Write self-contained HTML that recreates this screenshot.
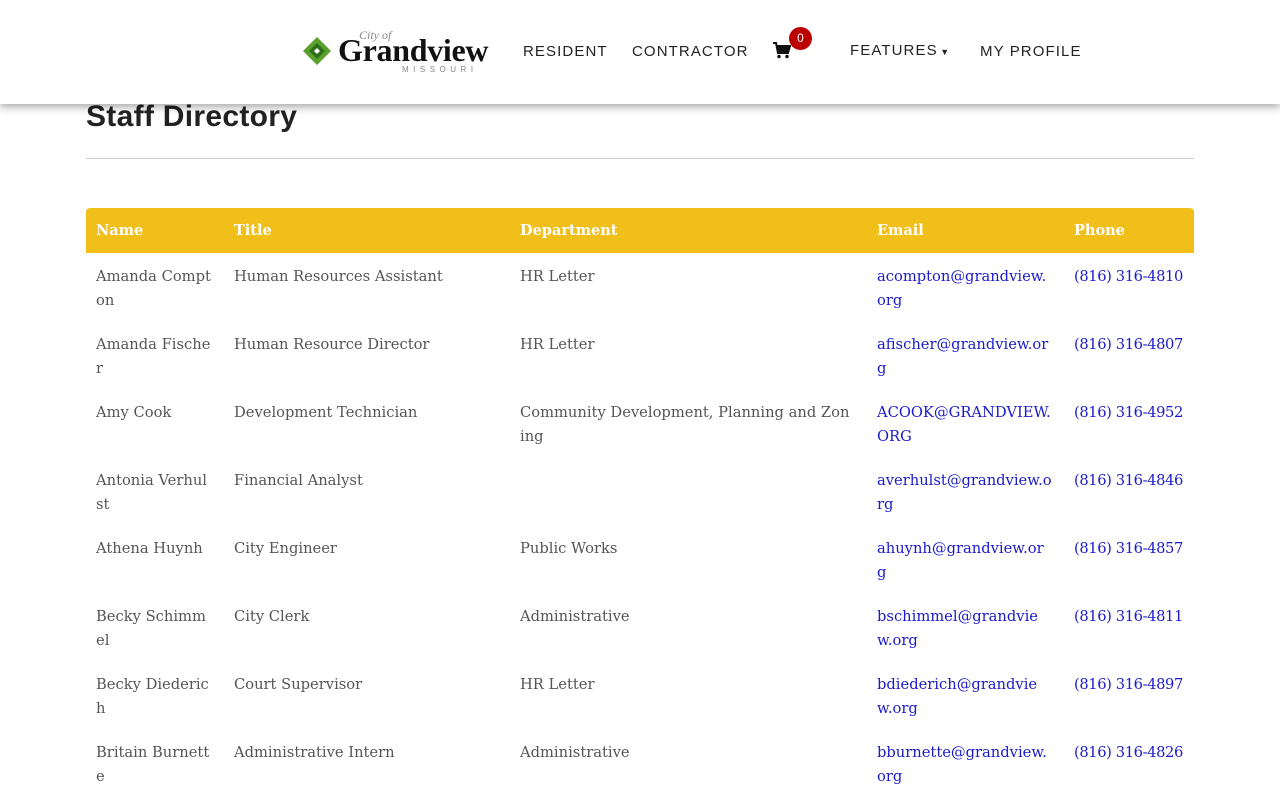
<!DOCTYPE html>
<html><head><meta charset="utf-8"><style>
*{margin:0;padding:0;box-sizing:border-box}
body{width:1280px;height:800px;overflow:hidden;background:#fff;font-family:"DejaVu Serif",serif;position:relative}
.hdr{position:absolute;left:0;top:0;width:1280px;height:104px;background:#fff;box-shadow:0 3px 8px rgba(0,0,0,.35);z-index:2}
.nav{position:absolute;top:43px;font-family:"Liberation Sans",sans-serif;font-size:15px;letter-spacing:1.1px;color:#222}
h1{position:absolute;left:86px;top:100px;font-family:"Liberation Sans",sans-serif;font-weight:bold;font-size:30px;color:#222;letter-spacing:0.3px}
.hr{position:absolute;left:86px;top:158px;width:1108px;height:1px;background:#ccc}
.th{position:absolute;left:86px;top:208px;width:1108px;height:45px;background:#f0bf1a;border-radius:4px 4px 0 0}
.h{position:absolute;top:222px;color:#fff;font-weight:bold;font-size:14.5px}
.c{position:absolute;font-size:14.7px;line-height:24px;color:#555;white-space:nowrap}
.l{color:#1a1acc}
.p{letter-spacing:-0.4px}
</style></head><body>
<div class="hdr">
<svg style="position:absolute;left:302px;top:36px" width="30" height="30" viewBox="0 0 30 30"><path d="M15 1L29 15L15 29L1 15Z" fill="#5aa02c"/><path d="M15 7L23 15L15 23L7 15Z" fill="#2f6e1a"/><path d="M15 12L18 15L15 18L12 15Z" fill="#fff"/></svg>
<div style="position:absolute;left:359px;top:28px;font-family:'Liberation Serif',serif;font-style:italic;font-size:12px;color:#888">City of</div>
<div style="position:absolute;left:338px;top:32px;font-family:'Liberation Serif',serif;font-weight:bold;font-size:32px;color:#111;letter-spacing:-0.3px">Grandview</div>
<div style="position:absolute;left:402px;top:65px;font-family:'Liberation Sans',sans-serif;font-size:8px;letter-spacing:4.5px;color:#888">MISSOURI</div>
<div class="nav" style="left:523px">RESIDENT</div>
<div class="nav" style="left:632px">CONTRACTOR</div>
<svg style="position:absolute;left:773px;top:42px" width="18" height="17" viewBox="0 0 18 17"><path d="M0 1H3L5 11H15L17 4H4" fill="none" stroke="#111" stroke-width="2"/><path d="M4 4H17L15 10H5Z" fill="#111"/><circle cx="6" cy="14.5" r="1.7" fill="#111"/><circle cx="14" cy="14.5" r="1.7" fill="#111"/></svg>
<div style="position:absolute;left:789px;top:27px;width:23px;height:23px;border-radius:50%;background:#b00;color:#fff;font-family:'Liberation Sans',sans-serif;font-size:12px;text-align:center;line-height:23px">0</div>
<div class="nav" style="left:850px;top:42px">FEATURES<span style="font-size:9px;letter-spacing:0">&nbsp;▼</span></div>
<div class="nav" style="left:980px">MY PROFILE</div>
</div>
<h1>Staff Directory</h1>
<div class="hr"></div>
<div class="th"></div>
<div class="h" style="left:96px">Name</div><div class="h" style="left:234px">Title</div><div class="h" style="left:520px">Department</div><div class="h" style="left:877px">Email</div><div class="h" style="left:1074px">Phone</div>

<div class="c" style="left:96px;top:265px">Amanda Compt<br>on</div><div class="c" style="left:234px;top:265px">Human Resources Assistant</div><div class="c" style="left:520px;top:265px">HR Letter</div><div class="c l" style="left:877px;top:265px">acompton@grandview.<br>org</div><div class="c l p" style="left:1074px;top:265px">(816) 316-4810</div>

<div class="c" style="left:96px;top:333px">Amanda Fische<br>r</div><div class="c" style="left:234px;top:333px">Human Resource Director</div><div class="c" style="left:520px;top:333px">HR Letter</div><div class="c l" style="left:877px;top:333px">afischer@grandview.or<br>g</div><div class="c l p" style="left:1074px;top:333px">(816) 316-4807</div>

<div class="c" style="left:96px;top:401px">Amy Cook</div><div class="c" style="left:234px;top:401px">Development Technician</div><div class="c" style="left:520px;top:401px">Community Development, Planning and Zon<br>ing</div><div class="c l" style="left:877px;top:401px">ACOOK@GRANDVIEW.<br>ORG</div><div class="c l p" style="left:1074px;top:401px">(816) 316-4952</div>

<div class="c" style="left:96px;top:469px">Antonia Verhul<br>st</div><div class="c" style="left:234px;top:469px">Financial Analyst</div><div class="c l" style="left:877px;top:469px">averhulst@grandview.o<br>rg</div><div class="c l p" style="left:1074px;top:469px">(816) 316-4846</div>

<div class="c" style="left:96px;top:537px">Athena Huynh</div><div class="c" style="left:234px;top:537px">City Engineer</div><div class="c" style="left:520px;top:537px">Public Works</div><div class="c l" style="left:877px;top:537px">ahuynh@grandview.or<br>g</div><div class="c l p" style="left:1074px;top:537px">(816) 316-4857</div>

<div class="c" style="left:96px;top:605px">Becky Schimm<br>el</div><div class="c" style="left:234px;top:605px">City Clerk</div><div class="c" style="left:520px;top:605px">Administrative</div><div class="c l" style="left:877px;top:605px">bschimmel@grandvie<br>w.org</div><div class="c l p" style="left:1074px;top:605px">(816) 316-4811</div>

<div class="c" style="left:96px;top:673px">Becky Diederic<br>h</div><div class="c" style="left:234px;top:673px">Court Supervisor</div><div class="c" style="left:520px;top:673px">HR Letter</div><div class="c l" style="left:877px;top:673px">bdiederich@grandvie<br>w.org</div><div class="c l p" style="left:1074px;top:673px">(816) 316-4897</div>

<div class="c" style="left:96px;top:741px">Britain Burnett<br>e</div><div class="c" style="left:234px;top:741px">Administrative Intern</div><div class="c" style="left:520px;top:741px">Administrative</div><div class="c l" style="left:877px;top:741px">bburnette@grandview.<br>org</div><div class="c l p" style="left:1074px;top:741px">(816) 316-4826</div>
</body></html>
